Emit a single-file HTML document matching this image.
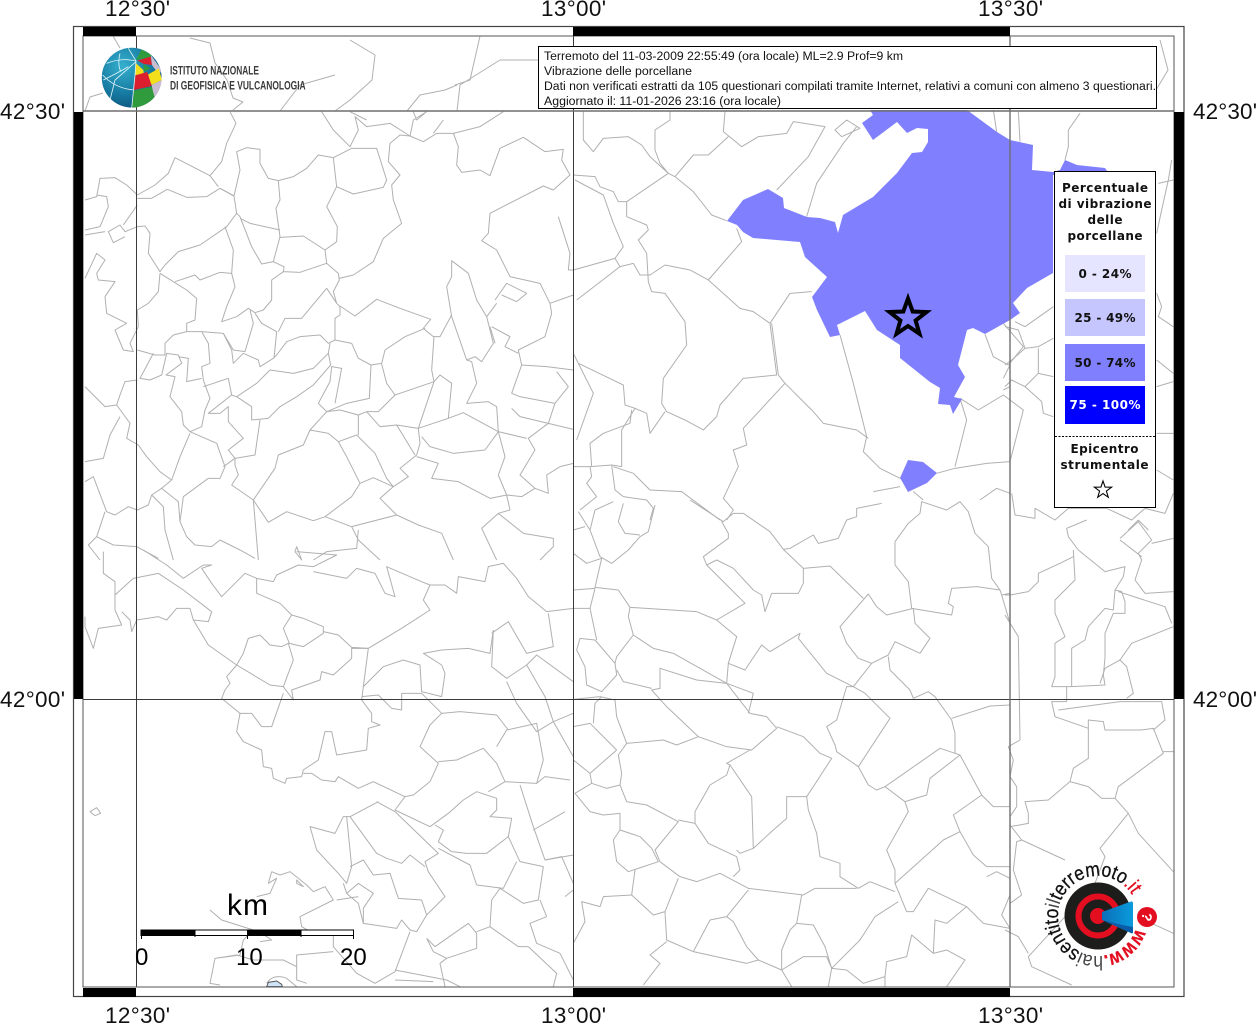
<!DOCTYPE html>
<html lang="it"><head><meta charset="utf-8"><title>Vibrazione delle porcellane</title>
<style>
html,body{margin:0;padding:0;background:#fff;width:1257px;height:1024px;overflow:hidden}
svg{display:block}
.m path{fill:none;stroke:#b0b0b0;stroke-width:3;stroke-linejoin:round}
.a{font:22.5px "Liberation Sans",sans-serif;fill:#111}
.l{font:bold 12px "DejaVu Sans",sans-serif;fill:#111;text-anchor:middle}
.t{font:11.5px "Liberation Sans",sans-serif;fill:#111}
</style></head><body>
<svg xmlns="http://www.w3.org/2000/svg" width="1257" height="1024" viewBox="0 0 1257 1024">
<defs>
<clipPath id="c"><rect x="83" y="36" width="1091" height="951"/></clipPath>
<clipPath id="g"><circle cx="215" cy="233" r="90"/></clipPath>
<radialGradient id="b" cx=".35" cy=".3" r=".8"><stop offset="0" stop-color="#35b0cf"/><stop offset=".6" stop-color="#16789f"/><stop offset="1" stop-color="#0d4f78"/></radialGradient>
<linearGradient id="k" x1="0" y1="0" x2="1" y2="0"><stop offset="0" stop-color="#0b6fb8"/><stop offset="1" stop-color="#0a9bdc"/></linearGradient>
<path id="ring" d="M1136,928.4 A40,40 0 1 1 1131.9,894.8"/>
</defs>
<rect width="1257" height="1024" fill="#fff"/>
<g clip-path="url(#c)">
<g class="m">
<path style="stroke-width:1" d="M190,38 L210,43 L215,63 L227,80 L233,98 L243,102 L233,110 M85,111 L90,97 L103,93 M113,36 L120,48 M350,40 L375,55 L372,80 L350,100 L335,111 M457,111 L460,85 L500,60 L538,60 M480,36 L470,80 L455,85 M407,111 L420,95 L445,90 L457,85 M1160,40 L1168,70 L1150,100 M280,111 L300,85 L335,75"/>
<g transform="translate(80,110) scale(.33333)">
<path d="M450,5 L468,40 L440,100 L425,155 L390,197 L285,143 L265,190 L225,225 L172,255 L140,225 L105,203 L60,205 L50,260 L15,270 M50,255 L80,260 L85,290 L60,350 L15,360"/>
<path d="M172,265 L215,265 L262,238 L320,262 L380,260 L420,235 L462,258 L470,310 L440,350 L360,405 L295,425 L255,465 L240,485 L205,430 L210,370 L195,348 L172,350 L135,365 L120,345 L85,365 L100,398 L135,380 M172,285 L130,345 M15,375 L75,365"/>
<path d="M390,197 L415,230 M420,235 L462,258 L480,180 L470,125 L500,113 L540,118 L540,160 L565,205 L595,212 L640,200 L680,175 L715,135 L760,143 L815,115 L890,115 L920,210 L910,232 L820,252 L770,230 L760,143"/>
<path d="M595,212 L600,270 L588,295 L600,380 L580,455 L545,462 L515,410 L480,320 L470,310 M480,325 L510,340 L600,360 M600,382 L670,378 L735,420 L770,395 L772,350 L740,290 L770,230"/>
<path d="M735,420 L740,460 L660,487 L610,485 L575,510 L575,570 L550,600 L525,608 L505,595 L470,620 L425,635 L440,590 L465,530 L455,490 L460,420 L435,350 M580,455 L612,470 L610,487"/>
<path d="M740,460 L775,490 L778,510 L760,545 L770,580 L780,590 L780,615 L765,625 L765,690 L745,700 L720,675 L660,680 L620,695 L590,735 L580,745 L540,770 L535,750 L490,730 L460,760 L455,720 L430,670 L365,665 L320,665 L320,640 L345,630 L350,565 L320,540 L280,515 L240,490"/>
<path d="M778,505 L820,495 L880,455 L910,385 L965,340 L940,270 L935,225 L960,195 L925,155 L930,100 L960,75 L990,78 L1030,95 L1070,70 L1120,70 L1200,50 L1270,5 M725,5 L760,60 L810,110 L835,60 L825,20 L860,50 L930,40 L990,78 L1000,30 L1040,5 M810,5 L860,30 M1000,5 L1010,30 L1040,5 M1090,30 L1060,70"/>
<path d="M1120,70 L1135,110 L1130,165 L1145,187 L1200,180 L1230,197 L1260,115 L1330,82 L1395,125 L1450,118 L1445,150 L1470,195 L1420,240 L1390,228 L1230,310 L1225,370 L1205,392 L1250,420 L1290,500 L1380,520 L1410,580 L1480,555"/>
<path d="M1115,452 L1165,490 L1190,570 L1220,620 L1240,700 L1205,755 L1185,740 L1160,750 L1115,620 L1100,530 L1115,500 Z M1115,615 L1080,680 L1060,680 L1030,655 L1052,628 L960,595 L890,568 L825,618 L780,588 M1035,655 L975,680 L915,720 L905,760 L873,765 L835,745 L815,700 L765,690"/>
<path d="M1062,680 L1055,780 L1062,815 L960,850 L945,855 L920,820 L905,762 M873,765 L868,865 L800,880 L740,905 L715,880 L750,815 L755,770 L785,775 L765,880 M750,700 L745,730 L752,765 L700,825 L650,860 L600,890 L565,925 L515,930 L515,890 L470,860 L530,820 L570,780 L640,790 L700,775 L745,730"/>
<path d="M945,855 L895,905 L860,905 L835,915 L780,900 L740,905 L690,960 L670,1005 L595,1035 L585,1075 L520,1170 L455,1125 L475,1095 L465,1065 L465,1045 L525,1035 L540,930 M1062,815 L1015,955 L1020,1000 L1010,1035 L960,1075 L985,1100 L940,1130 L920,1105 L885,1030 L830,975 L775,995 L745,970 L690,960 M835,915 L835,975"/>
<path d="M860,905 L900,950 L950,945 L1015,955 L1105,925 L1115,820 L1080,795 L1062,815 M1105,925 L1150,908 L1200,935 L1255,965 L1215,1020 L1120,1030 L1050,1010 L1025,980 M1255,965 L1250,890 L1225,875 L1160,880 L1190,820 L1175,755 L1160,750 M1255,965 L1275,1040 L1255,1095 L1280,1155 L1230,1165 L1135,1115 L1055,1105 L1075,1060 L1010,1040 M950,945 L1005,1035"/>
<path d="M1280,1155 L1325,1160 L1365,1135 L1320,1095 L1365,1020 L1345,985 L1405,940 L1425,880 L1320,860 L1295,850 L1325,765 L1315,720 L1395,680 L1415,610 L1410,580 M1325,765 L1400,770 L1480,780 M1235,650 L1290,680 L1275,710 L1315,730 M1245,570 L1280,520 L1340,550 L1310,575 L1265,555 M1255,965 L1340,985 M1405,940 L1480,958 M1220,620 L1250,580 M1230,650 L1245,700 M1425,880 L1465,830 L1430,785 M1295,895 L1320,920 L1405,940"/>
<path d="M1280,1155 L1290,1200 L1255,1210 L1205,1255 L1250,1350 M1255,1210 L1330,1270 L1420,1285 L1420,1310 L1380,1350 M1365,1135 L1405,1150 L1400,1095 L1440,1070 L1480,1060 M840,1120 L880,1103 L940,1130 L900,1165 L950,1215 L815,1250 L735,1220 L815,1160 L840,1120 L800,1040 L775,995 M735,1220 L700,1232 L620,1205 L565,1237 L520,1170 L535,1350 M950,1215 L1015,1245 L1085,1270 L1120,1350 M815,1250 L835,1290 L900,1350 M835,1260 L830,1315 L740,1325 L700,1350 M1435,320 L1470,430 L1465,480 L1480,480"/>
<path d="M240,490 L235,545 L205,580 L172,600 L175,650 L150,700 L160,725 L130,720 L105,660 L140,640 L80,610 L75,560 L105,515 L55,510 L50,490 L75,450 L50,430 L15,505 M172,720 L225,735 L255,735 L255,700 L280,675 L320,665 M285,515 L345,495 L360,510 L420,487 L455,490"/>
<path d="M220,730 L180,805 L210,810 L245,795 L260,730 L295,735 L305,760 L258,795 L285,800 L270,860 L305,905 L310,945 L330,965 L365,950 L375,900 L390,865 L370,810 L365,770 L390,760 L385,700 L365,665 M295,740 L325,745 L320,815 L365,805 M370,830 L445,805 L455,855 L470,860 M455,855 L385,910 L420,910 L445,890 L445,935 L490,985 L445,1020 L465,1045 L430,1070"/>
<path d="M330,965 L410,1000 L435,1070 L420,1105 L385,1105 L310,1160 L300,1235 L320,1280 L345,1305 L395,1310 L420,1290 L450,1305 L480,1320 L525,1345 M330,970 L300,1040 L275,1110 L240,1085 L200,1040 L175,1005 L140,985 L150,940 L110,885 L120,855 L135,815 L172,810 M110,885 L75,890 L15,830 M120,920 L90,975 L70,1045 L15,1055 M275,1110 L245,1135 L215,1155 L205,1185 L172,1200 L145,1190 L105,1215 L80,1205 L40,1100 L15,1115"/>
<path d="M245,1135 L295,1175 L300,1235 M215,1155 L250,1190 L255,1260 L280,1350 M75,1205 L50,1280 L25,1305 L60,1350 M50,1280 L100,1305 L170,1310 L235,1345 M430,670 L460,720 L495,725 L520,640 L510,600 M525,610 L545,640 L590,665 L582,745 M595,665 L615,625 L665,625 L740,535 L770,580 M650,1310 L665,1350 L645,1325 Z"/>
</g>
<g transform="translate(80,550) scale(.33333)">
<path d="M70,5 L70,70 L105,95 L105,180 L125,225 L55,235 L40,295 L15,230 L15,200 M105,135 L160,85 L235,70 L310,120 L395,185 L385,215 L340,210 L330,175 L290,175 L260,210 L235,200 L170,210 L155,245 L150,210 L125,185 M190,0 L260,45 L310,85 L370,45 L395,45 L365,55 L395,100 L425,140 L495,70 L530,85 L580,95 L590,75 L655,45 L700,50 L770,15 L650,5"/>
<path d="M530,85 L530,130 L600,160 L635,195 L610,235 L628,280 L670,290 L730,250 L730,230 L670,205 L635,195 M730,245 L775,255 L815,292 L865,295 L965,235 L1050,180 L1030,150 L1050,105 L1095,105 L1130,130 L1135,80 L1215,95 L1225,50 L1270,40 L1310,85 L1345,140 L1400,185 L1480,175 M700,65 L800,85 L830,55 L885,70 L915,130 L945,140 L920,50 L1025,95 L1050,105"/>
<path d="M340,210 L385,285 L470,345 L570,405 L610,410 L640,330 L625,280 L605,290 L570,285 L540,255 L505,265 L490,310 L470,345 L440,380 L450,400 L435,420 L425,445 L480,490 L470,545 L490,575 L545,600 L550,650 L575,655 L580,685 L615,700 L620,685 L665,680 L670,660 L715,630 L735,545 L755,545 L770,615 L860,600 L865,535 L900,525 L875,515 L875,490 L845,450 L850,410 L910,350 L970,330 L1020,345 L1025,425 L1085,440 L1095,370 L1085,345 L1030,310 L1085,300 L1165,295 L1230,310 L1240,240"/>
<path d="M610,410 L640,450 L635,420 L720,390 L725,365 L760,375 L815,325 L815,295 L865,295 L850,410 M610,430 L575,530 L545,530 L515,490 L480,490 M845,440 L895,435 L935,475 L965,480 L965,430 L1025,430 L1085,490 L1050,525 L1020,590 L1075,640 L1050,695 L1000,735 L975,740 L880,695 L835,715 L775,680 L765,695 L725,690 L695,670 L670,670"/>
<path d="M975,740 L945,780 L1050,830 L1105,790 L1150,750 L1190,725 L1250,745 L1250,780 L1230,800 L1295,805 L1285,860 L1220,910 L1160,910 L1115,905 L1075,875 L1090,840 L1065,825 M1075,635 L1130,630 L1210,595 L1250,640 L1275,695 L1370,700 L1390,630 L1370,520 L1280,540 L1250,590 M1085,490 L1140,485 L1250,495 L1285,540 M1275,695 L1225,725 M1320,705 L1360,830 L1395,930 L1480,915 M1370,700 L1395,680 L1470,690 M1360,840 L1455,785 M1240,240 L1235,350 L1280,385 L1340,345 L1395,440 L1420,515 L1480,620 M1280,395 L1310,460 L1370,545 L1420,515 L1480,490 M1340,345 L1370,315 L1480,395 M1235,250 L1285,215 L1340,310 L1420,290 L1405,190"/>
<path d="M1285,860 L1320,935 L1390,950 L1375,1050 L1330,1060 L1260,1015 L1235,1050 L1230,1130 L1315,1190 L1345,1190 M1395,930 L1445,920 L1480,1000 M895,755 L810,800 L790,800 L765,850 L690,830 L710,900 L775,970 L800,1000 L815,950 L810,900 L800,800 M890,755 L945,785 L1075,910 L1035,935 L1045,965 L1095,1040 L1040,1095 L1010,1145 L990,1140 L965,1110 L950,1135 L850,1120 L850,1075 L880,1030 L835,1000 L800,1030 L790,1000 M810,800 L890,910 L920,925 L965,940 L990,915 L1035,950"/>
<path d="M1075,895 L1170,945 L1190,1005 L1270,1015 L1310,935 M810,950 L850,930 L880,975 L930,970 L955,1045 L1025,1050 L1040,1095 M800,1030 L835,1060 L850,1120 M770,1050 L835,1040 M1040,1165 L1065,1190 L1165,1120 L1190,1150 L1190,1195 L1100,1225 L1080,1240 L1095,1310 M1040,1165 L1060,1205 L1100,1225 M1230,1130 L1190,1145 M1345,1190 L1430,1270 L1420,1310 M1400,1100 L1350,1120 L1370,1180 L1440,1210 L1480,1290 M1400,1100 L1380,1050 M1455,1040 L1480,1020"/>
<path d="M575,965 L565,1000 L590,985 L570,1030 L530,1040 M575,965 L600,975 L630,965 L680,1005 L700,1025 L735,1010 L760,1050 L660,1100 L665,1130 L700,1150 L760,1150 L760,1190 L830,1270 L885,1300 L945,1265 L990,1145 M390,1080 L425,1110 L520,1140 L490,1170 L480,1215 L405,1225 L390,1300 L420,1305 M405,1225 L470,1215 L520,1230 L610,1230 L650,1250 L650,1290 L680,1300 M760,1205 L650,1215 L650,1250 M545,1150 L575,1170 L540,1175 M650,990 L670,1010 L650,1000 Z M560,1300 Q580,1270 620,1285 L650,1310 M945,1260 L1100,1290 L1140,1310 M945,1290 L1060,1295 M30,785 L50,773 L62,790 L45,797 Z"/>
</g>
<g transform="translate(570,500) scale(.33333)">
<path d="M360,0 L460,65 L490,40 L520,40 L600,95 L640,148 L700,205 L780,198 L880,295 M455,65 L475,100 L475,115 L400,170 L410,195 L525,310 L440,360 L380,335 L180,322 L145,270 L75,262 L95,175 M640,148 L660,145 L730,105 L745,130 L805,115 L830,60 L860,50 L860,25 L935,10 M410,195 L440,180 L490,205 L550,270 L575,285 L585,335 L605,280 L685,280 L700,250 L700,205"/>
<path d="M440,360 L500,410 L475,490 L525,510 L575,435 L600,455 L690,400 L685,415 L770,520 L850,560 L905,490 L955,465 L975,425 L1050,460 L1080,415 L1035,370 L1030,325 L950,345 L920,320 L895,282 L810,380 L830,430 L865,475 L905,490 M1025,325 L1145,345 L1150,320 L1135,310 L1145,265 L1220,260 L1290,270 L1295,285 L1320,280 M1290,270 L1265,235 L1255,140 L1215,100 L1195,35 L1170,5 L1130,30 L1055,5 L1050,40 L1015,70 L975,125 L975,195 L1015,245 L1025,325 M1295,285 L1320,370"/>
<path d="M955,470 L960,510 L1020,570 L1030,595 L1075,575 L1095,590 L1145,660 L1155,700 L1155,760 L1110,745 L945,860 L920,870 L895,855 L865,800 L800,755 L795,735 L770,680 L800,660 L830,560 L850,560 L885,580 L960,655 L865,800 M1145,655 L1260,618 L1320,615 M1155,760 L1170,765 L1235,885 L1270,920 L1320,920 M1170,765 L1080,835 L1070,885 L1005,905 L945,860 M1005,905 L1015,935 L950,1050 L975,1110 L975,1150 L1120,1020 L1170,995 L1150,945 L1235,885 M1170,995 L1210,1065 L1250,1100 L1320,1100 M1250,1130 L1280,1115 L1320,1135 M975,1150 L1010,1235 L1030,1235 L1075,1165 L1190,1220 L1240,1270 L1320,1285 M1320,1185 L1295,1245 L1320,1285"/>
<path d="M975,1175 L900,1145 L865,1165 L810,1130 L810,1090 L750,1070 L740,1000 L715,930 L710,890 L650,890 L650,955 L610,990 L550,1045 L545,890 L480,795 L470,790 L540,750 L545,750 L620,685 L590,650 L540,640 L470,550 L380,540 L270,505 L270,565 L245,570 L290,620 L385,710 L470,740 L545,750 M620,680 L700,710 L750,760 L785,775 L730,860 L710,890 M470,550 L550,580 L535,640 M475,490 L470,550 M190,405 L250,445 L310,460 L470,550 M180,322 L175,350 L190,405 L140,470 L135,490 L75,420 L30,415 L20,450 L45,500 L50,555 L95,575 L140,525 L135,490 M140,510 L160,545 L245,565"/>
<path d="M10,598 L90,590 L135,600 L140,650 L170,730 L280,720 L320,735 L385,710 M170,730 L145,765 L155,820 L150,855 L170,905 L230,915 L325,965 L255,1050 L270,1085 L330,1130 L380,1145 L450,1120 L535,1165 L700,1185 L735,1165 L860,1165 M325,960 L375,970 L415,1030 L500,1070 L510,1110 L490,1130 M500,1050 L510,1060 L550,1045 M375,970 L375,935 L420,855 L470,825 L480,795 M140,750 L60,820 L65,850 L110,865 L150,855 M140,750 L60,670 L10,680 M70,670 L75,610 L95,590 M60,820 L10,780 M65,850 L15,880 L60,935 L100,945 L150,940 L150,990 L130,1020 L140,1085 L175,1115 L265,1085 L245,1045 L210,1010 L150,990"/>
<path d="M195,1110 L185,1185 L250,1245 L285,1235 L325,1135 M185,1185 L100,1190 L90,1220 L35,1205 L45,1265 L10,1330 M285,1235 L290,1320 L370,1355 L420,1260 L470,1250 L535,1170 M470,1250 L490,1265 L530,1340 L565,1380 L635,1410 L635,1350 L660,1290 L680,1270 L695,1185 M680,1270 L730,1275 L765,1340 L785,1405 L870,1320 L915,1250 L985,1205 M635,1410 L700,1370 L770,1370 L785,1405 L775,1460 M785,1405 L830,1410 L880,1450 L945,1430 L950,1385 L1010,1370 L1025,1305 L1090,1360 L1130,1350 L1185,1380 L1130,1460 M1090,1360 L1095,1260 L1130,1270 L1190,1220 M945,1430 L945,1460 M290,1325 L240,1365 L270,1390 L220,1455 M370,1355 L530,1390 L565,1380 M635,1410 L665,1460"/>
<path d="M75,265 L60,325 L80,420 M10,325 L60,325 M10,270 L75,265 M95,175 L50,190 L10,160 M90,170 L125,190 L175,150 L210,110 L235,95 L255,15 M210,105 L165,100 L145,65 L160,10 M130,5 L75,30 L60,90 L90,170 M60,90 L25,35 M10,90 L45,80"/>
</g>
<g transform="translate(570,100) scale(.33333)">
<path d="M465,35 L460,95 L515,140 L565,110 L650,100 L670,65 L765,80 L715,170 L620,270 M475,110 L415,165 L370,165 L315,230 L370,275 L425,345 L470,362 M300,35 L300,60 L255,90 L255,150 L270,190 L295,220 L170,305 L145,305 L130,275 L90,260 L75,230 L10,225 M40,35 L40,120 L70,155 L100,115 L175,110 L215,135 L240,170 L295,220 L315,230"/>
<path d="M170,305 L170,350 L230,375 L235,390 L205,420 L230,460 L235,545 L245,575 L285,580 L345,665 L350,735 L280,835 L275,910 L290,935 L345,960 L400,990 L440,950 L450,915 L520,835 L620,825 L600,670 L550,635 L510,625 L415,540 L360,510 L285,495 L240,525 L210,525 L190,490 L150,500 L135,475 L10,510 M415,540 L515,425 L500,385 M600,670 L660,580 L725,575 M605,670 L625,825 L645,850 L520,985 L530,1035 L490,1050 L505,1100 L460,1195 L490,1230 L470,1260 M645,850 L730,935 L760,970 L860,990 L895,1015"/>
<path d="M285,935 L240,1000 L230,940 L195,925 L155,990 L155,1100 L125,1095 L60,1100 L10,1100 M195,925 L165,915 L160,855 L25,790 L10,760 M185,930 L180,970 L100,1000 L60,1030 L65,1100 M125,1095 L135,1170 L160,1190 L230,1200 L250,1225 L240,1260 M130,1100 L190,1120 L240,1170 L335,1175 L450,1260 M60,1100 L65,1130 L50,1150 L80,1190 L30,1230 M150,500 L20,600 M15,240 L100,285 L130,370 L160,440 L135,475 M25,790 L70,880 L20,1020 M795,90 L830,60 L870,85 L815,110 Z M860,80 L820,130 L740,250 L710,350"/>
</g>
<g transform="translate(710,100) scale(.33333)">
<path d="M850,30 L860,95 M390,705 L430,850 L470,1010 L460,1055 L510,1105 L570,1135 M680,1120 L735,1105 L830,1090 L900,1085 L940,930 L880,885 L805,930 L750,895 L770,960 L735,1100 M610,1175 L640,1200 M570,1160 L490,1175 M880,670 L940,740 L895,795 L850,770 L825,703 M880,835 L900,795 M880,870 L900,860"/>
<path d="M810,1200 L860,1165 L900,1180"/>
</g>
<g transform="translate(1005,100) scale(.33333)">
<path d="M40,35 L45,125 M225,40 L190,90 L190,140 L180,180 M500,180 L490,240 L470,330 L455,400 M460,250 L505,240 M455,580 L470,620 L460,650 L505,680 M0,680 L40,690 L60,745 L100,740 L145,715 M145,620 L60,680 L30,665 M60,745 L20,780 L0,795 M100,745 L100,820 L60,860 L20,840 L0,860 M100,820 L145,830 M60,860 L110,905 L115,940 L145,950 M455,780 L505,820 M455,860 L505,845 M455,1000 L505,1000 M455,1110 L505,1140 M505,1180 L480,1240 L420,1225 L380,1260 L305,1225 L240,1225 L190,1225 L150,1260 L90,1225 L90,1255 L30,1245 L20,1180 M400,1260 L370,1290 M400,1260 L430,1290"/>
</g>
<g transform="translate(1005,520) scale(.33333)">
<path d="M190,50 L185,25 L245,0 M190,50 L220,90 L300,155 L360,140 L355,170 L330,210 L325,270 L300,265 L250,320 L240,360 L200,385 L200,500 L300,495 L295,465 L300,415 L300,340 L325,280 M205,90 L210,180 L150,240 L150,280 L180,350 L150,370 L150,470 L140,500 L200,500 M205,110 L165,130 L100,160 L100,185 L70,215 L15,225 L0,225 M345,55 L400,5 L440,60 L400,100 L410,120 L390,180 L420,220 L505,215 M345,60 L410,110 M440,70 L505,55 M330,210 L350,215 L360,245 L360,280 L325,280 M340,215 L480,260 L500,310 M505,320 L380,370 L345,420 L300,445 L285,490 M345,420 L365,440 L385,520 L365,535"/>
<path d="M185,500 L185,545 L140,545 L150,590 L250,625 L250,600 L295,605 L300,630 L410,630 L445,625 L475,700 L340,800 L330,835 L290,835 L250,800 L195,785 L130,840 L60,845 L70,880 L70,910 L15,920 M250,625 L250,715 L205,745 L195,785 M160,570 L345,545 L470,545 L480,600 L445,630 M475,695 L505,695 M330,835 L370,880 L285,985 L300,1010 L270,1090 M370,880 L400,940 L505,1055 M0,285 L40,350 L45,660 L10,680 L25,720 L15,770 L35,800 L35,860 L15,890 L15,915 L50,960 L35,965 L25,1050 L50,1125 L15,1150 M50,960 L180,1020 M180,1190 L70,1310 L80,1340 L200,1395 M0,1230 L40,1250 L70,1300 M440,1210 L505,1240"/>
</g>
</g>
<path d="M560,1310 L565,1297 L590,1293 L605,1303 L607,1310 Z" transform="translate(80,550) scale(.33333)" fill="#cfe5f7" stroke="#555" stroke-width="3"/>
<path fill="#8080ff" d="M870,110 L873,115 L862,123 L873,140 L897,122 L907,133 L917,128 L928,129 L928,142 L922,152 L912,153 L897,173 L873,197 L843,215 L838,233 L835,222 L820,218 L807,217 L784,208 L783,198 L768,189 L743,200 L727,221 L737,225 L743,232 L753,238 L800,242 L805,257 L827,277 L812,297 L817,310 L830,337 L840,335 L837,325 L865,311 L877,330 L900,345 L900,358 L930,382 L940,388 L938,404 L950,405 L953,414 L962,399 L954,397 L965,377 L958,365 L967,330 L973,328 L985,334 L1010,320 L1020,313 L1013,303 L1027,288 L1053,273 L1053,172 L1032,170 L1033,145 L1010,140 L997,132 L967,110 Z"/>
<path fill="#8080ff" d="M1053,172 L1060,170 L1065,160 L1077,165 L1105,168 L1110,175 L1053,175 Z"/>
<path fill="#8080ff" d="M900,478 L908,460 L923,462 L937,473 L927,483 L908,492 L903,483 Z"/>
</g>
<!-- grid -->
<g fill="none">
<path d="M136.5,36V987 M573.5,36V987M83,699.5H1174" stroke="#3a3a3a" stroke-width="1"/>
<path d="M1010,36V987M83,111H1174" stroke="#6f6f6f" stroke-width="1.4"/>
<rect x="73.5" y="26.5" width="1110.5" height="970" stroke="#444" stroke-width="1.2"/>
<rect x="83" y="36" width="1091" height="951" stroke="#555" stroke-width="1"/>
</g>
<g fill="#000">
<rect x="83" y="27" width="53" height="9"/><rect x="573" y="27" width="437" height="9"/>
<rect x="83" y="988" width="53" height="9"/><rect x="573" y="988" width="437" height="9"/>
<rect x="74" y="112" width="9" height="587"/><rect x="1174" y="112" width="10" height="587"/>
</g>
<!-- epicentre star -->
<path d="M908,298.5 L912.7,311.5 L926.5,312 L915.6,320.5 L919.5,333.8 L908,326 L896.5,333.8 L900.4,320.5 L889.5,312 L903.3,311.5 Z" fill="#8080ff" stroke="#000" stroke-width="4"/>
<!-- axis labels -->
<g class="a">
<text x="105" y="16" textLength="65">12°30'</text><text x="541" y="16" textLength="65">13°00'</text><text x="978" y="16" textLength="65">13°30'</text>
<text x="105" y="1023" textLength="65">12°30'</text><text x="541" y="1023" textLength="65">13°00'</text><text x="978" y="1023" textLength="65">13°30'</text>
<text x="0" y="119" textLength="65">42°30'</text><text x="0" y="707" textLength="65">42°00'</text>
<text x="1193" y="119" textLength="64">42°30'</text><text x="1193" y="707" textLength="64">42°00'</text>
</g>
<!-- INGV logo -->
<g transform="translate(60,0) scale(.33333)">
<g clip-path="url(#g)">
<circle cx="215" cy="233" r="90" fill="url(#b)"/>
<path fill="#2f9b3c" d="M228,180 L245,148 L275,165 L272,172 Z"/>
<path fill="#dc1f2e" d="M232,182 L272,170 L276,195 L252,192 Z"/>
<path fill="#c8bdd0" d="M272,165 L305,210 L297,225 L276,195 Z"/>
<path fill="#f3de1c" d="M226,188 L250,210 L252,225 L226,225 Z"/>
<path fill="#2f9b3c" d="M250,192 L272,205 L252,215 Z"/>
<path fill="#f3de1c" d="M262,225 L296,205 L306,240 L275,255 Z"/>
<path fill="#dc1f2e" d="M225,226 L262,216 L275,258 L222,270 Z"/>
<path fill="#c8bdd0" d="M275,255 L306,240 L300,285 L282,295 Z"/>
<path fill="#2f9b3c" d="M222,272 L275,260 L285,295 L250,325 L216,325 Z"/>
<g fill="none" stroke="#dff3f7" stroke-width="2.5">
<path d="M205,145 L228,183 L225,226 L215,325 M140,190 Q185,172 228,183 M180,160 Q172,190 182,215 M228,185 L165,240 L150,300 M130,240 Q180,215 205,200 M128,225 Q165,265 222,270"/>
</g>
</g>
<text x="330" y="224" textLength="267" lengthAdjust="spacingAndGlyphs" font-family="Liberation Sans,sans-serif" font-size="36" font-weight="bold" fill="#3a3a3a">ISTITUTO NAZIONALE</text>
<text x="330" y="268" textLength="407" lengthAdjust="spacingAndGlyphs" font-family="Liberation Sans,sans-serif" font-size="36" font-weight="bold" fill="#3a3a3a">DI GEOFISICA E VULCANOLOGIA</text>
</g>
<!-- title box -->
<rect x="538.5" y="46.5" width="618" height="62" fill="#fff" stroke="#000"/>
<g class="t">
<text x="544" y="60" textLength="359" lengthAdjust="spacingAndGlyphs">Terremoto del 11-03-2009 22:55:49 (ora locale) ML=2.9 Prof=9 km</text>
<text x="544" y="75" textLength="148" lengthAdjust="spacingAndGlyphs">Vibrazione delle porcellane</text>
<text x="544" y="90" textLength="612" lengthAdjust="spacingAndGlyphs">Dati non verificati estratti da 105 questionari compilati tramite Internet, relativi a comuni con almeno 3 questionari.</text>
<text x="544" y="105" textLength="237" lengthAdjust="spacingAndGlyphs">Aggiornato il: 11-01-2026 23:16 (ora locale)</text>
</g>
<!-- legend -->
<rect x="1054.5" y="171.5" width="101" height="336" fill="#fff" stroke="#000"/>
<rect x="1065" y="255" width="80" height="37" fill="#e5e5ff"/>
<rect x="1065" y="299" width="80" height="37" fill="#c6c6ff"/>
<rect x="1065" y="344" width="80" height="37" fill="#8080ff"/>
<rect x="1065" y="386" width="80" height="38" fill="#0000ff"/>
<path d="M1055,436.5H1155" stroke="#000" stroke-dasharray="2 1.5"/>
<g class="l">
<text x="1105" y="192" textLength="86">Percentuale</text>
<text x="1105" y="208" textLength="93">di vibrazione</text>
<text x="1105" y="224" textLength="35">delle</text>
<text x="1105" y="240" textLength="75">porcellane</text>
<text x="1105" y="278" textLength="53">0 - 24%</text>
<text x="1105" y="322" textLength="61">25 - 49%</text>
<text x="1105" y="367" textLength="61">50 - 74%</text>
<text x="1105" y="409" textLength="71" style="fill:#fff">75 - 100%</text>
<text x="1104.5" y="453" textLength="68">Epicentro</text>
<text x="1104.5" y="469" textLength="88">strumentale</text>
</g>
<path d="M1103,481 L1105.1,487.1 L1111.6,487.2 L1106.4,491.1 L1108.3,497.3 L1103,493.6 L1097.7,497.3 L1099.6,491.1 L1094.4,487.2 L1100.9,487.1 Z" fill="#fff" stroke="#000" stroke-width="1.1"/>
<!-- scale -->
<text x="227" y="915" font-family="Liberation Sans,sans-serif" font-size="30" fill="#000" textLength="41">km</text>
<g>
<rect x="141" y="930" width="212.5" height="5.5" fill="#fff" stroke="#000" stroke-width="1"/>
<rect x="141" y="930" width="54" height="6" fill="#000"/><rect x="247" y="930" width="54" height="6" fill="#000"/>
<path d="M141.5,930V939M195,930V937M247.5,930V939M301,930V937M353.5,930V939" stroke="#000" stroke-width="1"/>
</g>
<g font-family="Liberation Sans,sans-serif" font-size="24" fill="#000">
<text x="135" y="965">0</text><text x="236" y="965">10</text><text x="340" y="965">20</text>
</g>
<!-- haisentito logo -->
<circle cx="1098" cy="916" r="33.5" fill="#1d1d1b"/>
<circle cx="1098" cy="916" r="19.5" fill="none" stroke="#e30f20" stroke-width="6"/>
<circle cx="1098" cy="916" r="8" fill="#e30f20"/>
<path d="M1102,912 L1131,901.5 Q1133,901 1133,904 L1133,932 Q1133,934 1131,933 L1102,920 Z" fill="url(#k)"/>
<path d="M1103,920 L1122,925 L1133,927 L1133,932 Q1133,934 1131,933 Z" fill="#0a5ca8"/>
<circle cx="1147" cy="917" r="10" fill="#e30f20"/>
<text x="1147" y="922" text-anchor="middle" transform="rotate(100 1147 917)" font-family="Liberation Sans,sans-serif" font-size="14" font-weight="bold" fill="#fff">?</text>
<text font-family="Liberation Sans,sans-serif" font-size="20" fill="#111" stroke="#111" stroke-width=".3"><textPath href="#ring" textLength="216" lengthAdjust="spacingAndGlyphs"><tspan fill="#e30f20" stroke="#e30f20" font-weight="bold">www.</tspan><tspan fill="#444" stroke="none">hai</tspan><tspan>sentito</tspan><tspan fill="#444" stroke="none">il</tspan><tspan>terremoto</tspan><tspan fill="#e30f20" stroke="#e30f20">.it</tspan></textPath></text>
</svg>
</body></html>
